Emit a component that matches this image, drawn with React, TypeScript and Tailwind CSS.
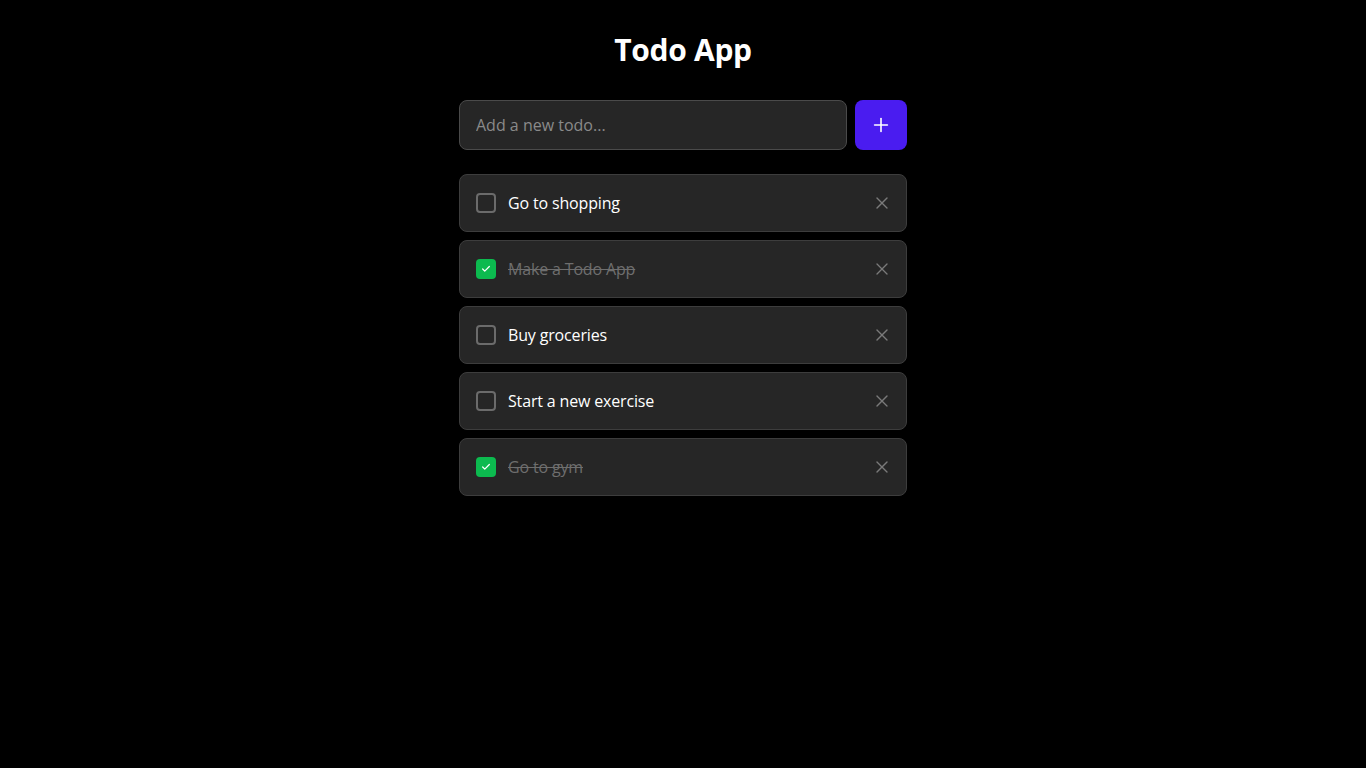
import { useState } from "react";
import { Plus, X, Check } from "lucide-react";

interface Todo {
  id: number;
  text: string;
  done: boolean;
}

const INITIAL: Todo[] = [
  { id: 1, text: "Go to shopping", done: false },
  { id: 2, text: "Make a Todo App", done: true },
  { id: 3, text: "Buy groceries", done: false },
  { id: 4, text: "Start a new exercise", done: false },
  { id: 5, text: "Go to gym", done: true },
];

export default function App() {
  const [todos, setTodos] = useState(INITIAL);
  const [draft, setDraft] = useState("");

  const add = () => {
    if (!draft.trim()) return;
    setTodos([...todos, { id: Date.now(), text: draft.trim(), done: false }]);
    setDraft("");
  };

  return (
    <div className="min-h-screen bg-black px-4 py-8 font-['Open_Sans',sans-serif] text-white">
      <div className="mx-auto w-full max-w-md">
        <h1 className="mb-8 text-center text-3xl font-bold tracking-[-0.01em]">Todo App</h1>

        <div className="mb-6 flex gap-2">
          <input
            value={draft}
            onChange={(e) => setDraft(e.target.value)}
            onKeyDown={(e) => e.key === "Enter" && add()}
            placeholder="Add a new todo..."
            className="flex-1 rounded-lg border border-[#4a4a4a] bg-[#262626] px-4 py-3 text-base text-white outline-none placeholder:text-[#8a8a8a]"
          />
          <button
            onClick={add}
            className="flex w-[52px] items-center justify-center rounded-lg bg-[#4a1cf0] text-white"
          >
            <Plus size={22} strokeWidth={1.75} />
          </button>
        </div>

        <ul className="space-y-2">
          {todos.map((todo) => (
            <li
              key={todo.id}
              className="flex items-center gap-3 rounded-lg border border-[#3d3d3d] bg-[#262626] px-4 py-4"
            >
              <button
                onClick={() =>
                  setTodos(todos.map((t) => (t.id === todo.id ? { ...t, done: !t.done } : t)))
                }
                className={`flex h-5 w-5 shrink-0 items-center justify-center rounded ${
                  todo.done ? "bg-[#0cba4f]" : "border-2 border-[#6b6b6b]"
                }`}
              >
                {todo.done && <Check size={10} strokeWidth={3} className="text-white" />}
              </button>
              <span
                className={`flex-1 text-base leading-6 tracking-[-0.01em] ${
                  todo.done ? "text-[#6e6e6e] line-through" : "text-white"
                }`}
              >
                {todo.text}
              </span>
              <button
                onClick={() => setTodos(todos.filter((t) => t.id !== todo.id))}
                className="-mr-0.5 text-[#7a7a7a]"
              >
                <X size={20} strokeWidth={1.6} />
              </button>
            </li>
          ))}
        </ul>
      </div>
    </div>
  );
}
